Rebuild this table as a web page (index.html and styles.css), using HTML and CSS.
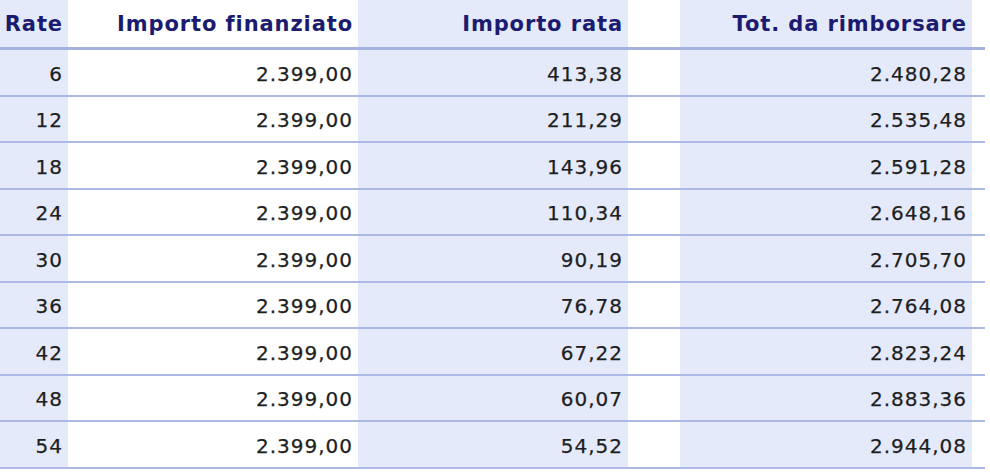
FILE: index.html
```html
<!DOCTYPE html>
<html lang="it">
<head>
<meta charset="utf-8">
<title>Rate</title>
<link rel="stylesheet" href="styles.css">
</head>
<body>
<table class="rates">
  <colgroup>
    <col class="c-rate">
    <col class="c-fin">
    <col class="c-rata">
    <col class="c-gap">
    <col class="c-tot">
    <col class="c-end">
  </colgroup>
  <thead>
    <tr>
      <th class="shade">Rate</th>
      <th>Importo finanziato</th>
      <th class="shade">Importo rata</th>
      <th></th>
      <th class="shade">Tot. da rimborsare</th>
      <th></th>
    </tr>
  </thead>
  <tbody>
    <tr><td class="shade">6</td><td>2.399,00</td><td class="shade">413,38</td><td></td><td class="shade">2.480,28</td><td></td></tr>
    <tr><td class="shade">12</td><td>2.399,00</td><td class="shade">211,29</td><td></td><td class="shade">2.535,48</td><td></td></tr>
    <tr><td class="shade">18</td><td>2.399,00</td><td class="shade">143,96</td><td></td><td class="shade">2.591,28</td><td></td></tr>
    <tr><td class="shade">24</td><td>2.399,00</td><td class="shade">110,34</td><td></td><td class="shade">2.648,16</td><td></td></tr>
    <tr><td class="shade">30</td><td>2.399,00</td><td class="shade">90,19</td><td></td><td class="shade">2.705,70</td><td></td></tr>
    <tr><td class="shade">36</td><td>2.399,00</td><td class="shade">76,78</td><td></td><td class="shade">2.764,08</td><td></td></tr>
    <tr><td class="shade">42</td><td>2.399,00</td><td class="shade">67,22</td><td></td><td class="shade">2.823,24</td><td></td></tr>
    <tr><td class="shade">48</td><td>2.399,00</td><td class="shade">60,07</td><td></td><td class="shade">2.883,36</td><td></td></tr>
    <tr><td class="shade">54</td><td>2.399,00</td><td class="shade">54,52</td><td></td><td class="shade">2.944,08</td><td></td></tr>
  </tbody>
</table>
</body>
</html>
```
FILE: styles.css
```css
html, body {
  margin: 0;
  padding: 0;
  background: #ffffff;
}

.rates {
  border-collapse: collapse;
  table-layout: fixed;
  width: 985px;
  font-family: "DejaVu Sans", Verdana, sans-serif;
}

.c-rate { width: 68px; }
.c-fin { width: 290px; }
.c-rata { width: 270px; }
.c-gap { width: 52px; }
.c-tot { width: 292px; }
.c-end { width: 13px; }

.rates th,
.rates td {
  padding: 0 5px 0 0;
  text-align: right;
  white-space: nowrap;
}

.rates th {
  height: 47px;
  font-size: 21px;
  font-weight: bold;
  letter-spacing: 0.9px;
  color: #1b1b6f;
  border-bottom: 3px solid #a4b2e0;
  vertical-align: middle;
}

.rates td {
  height: 41.5px;
  font-size: 20px;
  letter-spacing: 1px;
  color: #1e1e1e;
  -webkit-text-stroke: 0.25px #1e1e1e;
  border-bottom: 2px solid #abb9e4;
  padding-top: 3px;
}

.rates .shade {
  background: #e5eafb;
}
```
